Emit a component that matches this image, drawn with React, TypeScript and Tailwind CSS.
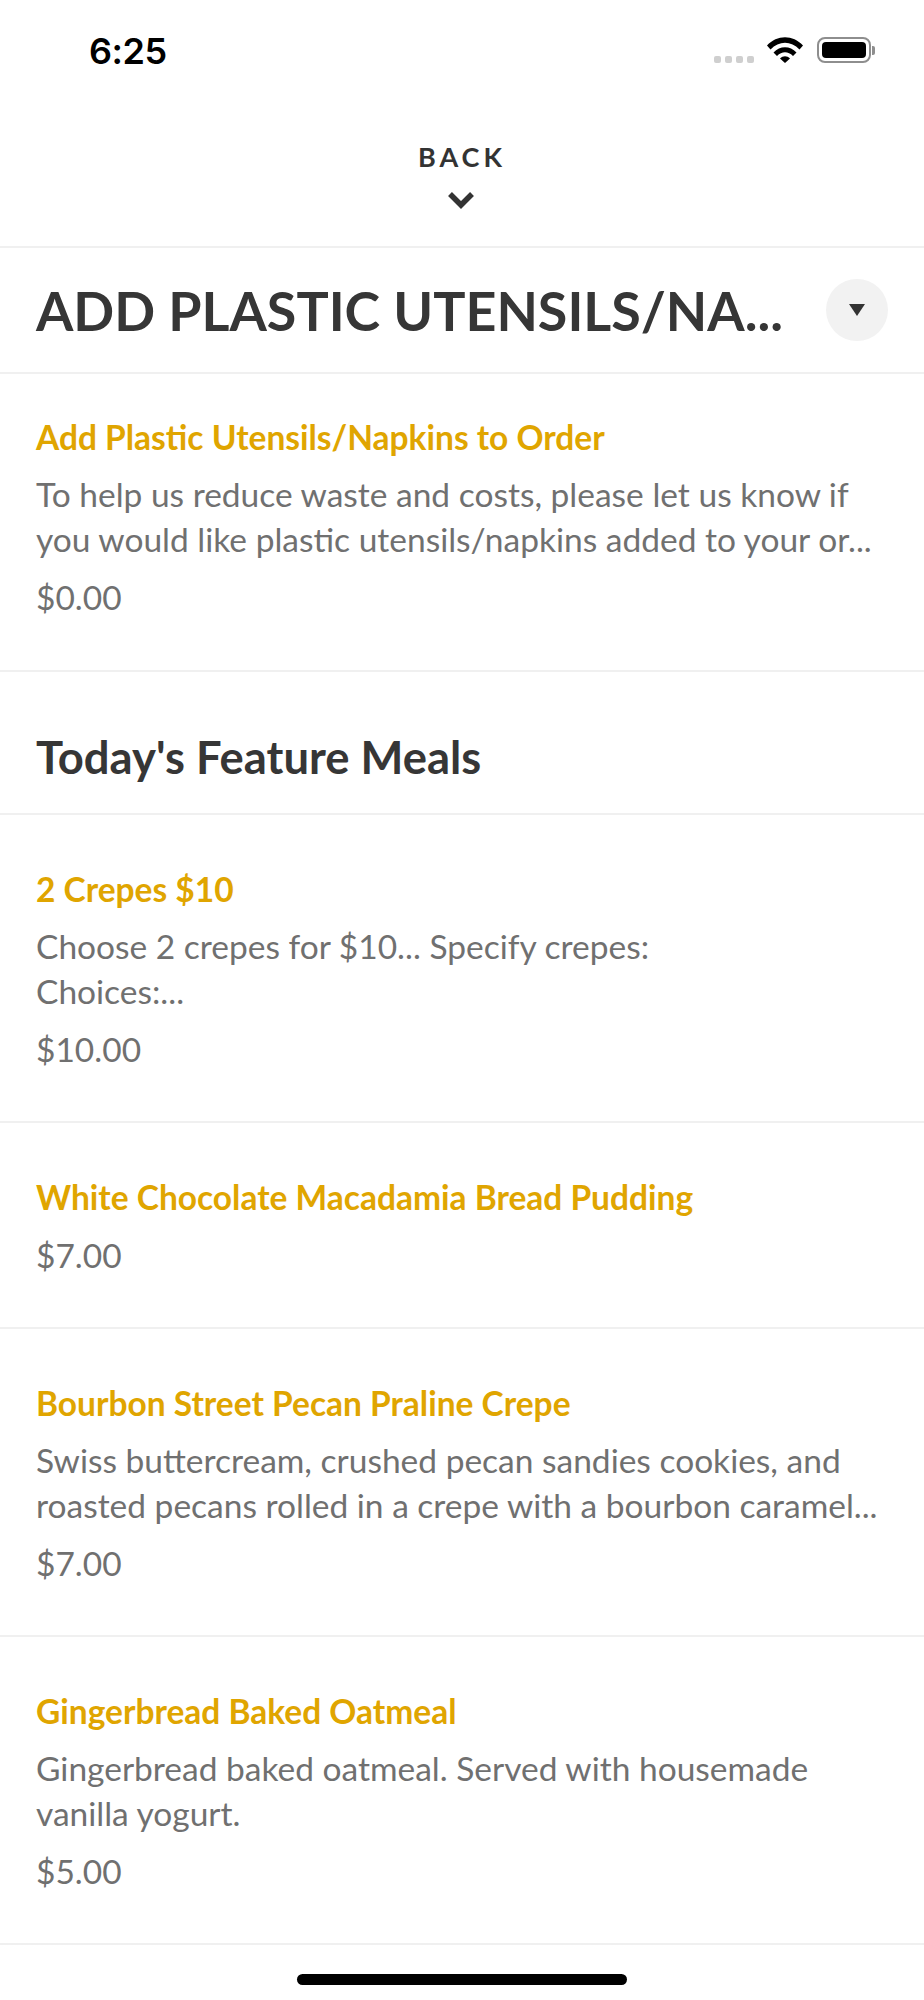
import React from 'react';

interface MealRowProps {
  title: string;
  description?: string[];
  price: string;
  compact?: boolean;
}

const MealRow: React.FC<MealRowProps> = ({ title, description, price, compact }) => (
  <div className={`border-b-2 border-[#f0f0f0] px-9 ${compact ? 'pt-[40px] pb-[50px]' : 'pt-[51px] pb-[49px]'}`}>
    <h3 className="text-[33.5px] leading-[46px] font-bold text-[#e0a500] whitespace-nowrap">{title}</h3>
    {description && (
      <div className="mt-[12px] text-[33.5px] leading-[45px] text-[#707070]">
        {description.map((line) => (
          <p key={line} className="whitespace-nowrap">{line}</p>
        ))}
      </div>
    )}
    <p className="mt-[13px] text-[33.5px] leading-[45px] text-[#707070]">{price}</p>
  </div>
);

const StatusBar = () => (
  <div className="h-[96px] flex items-start justify-between pl-[89px] pr-[49px] pt-[27px]">
    <span className="text-[36px] leading-[48px] font-semibold tracking-[-0.5px] text-black font-['Inter',sans-serif]">6:25</span>
    <div className="flex items-start pt-[10px]">
      <div className="flex gap-[4px] mt-[19px] mr-[13px]">
        <span className="w-[7px] h-[7px] rounded-[2px] bg-[#cfcfcf]"></span>
        <span className="w-[7px] h-[7px] rounded-[2px] bg-[#cfcfcf]"></span>
        <span className="w-[7px] h-[7px] rounded-[2px] bg-[#cfcfcf]"></span>
        <span className="w-[7px] h-[7px] rounded-[2px] bg-[#cfcfcf]"></span>
      </div>
      <svg width="36" height="26" viewBox="0 0 36 26" className="mr-[14px]">
        <path d="M0 8.5 C10 -2.5 26 -2.5 36 8.5 L32.5 12.5 C24 3.5 12 3.5 3.5 12.5 Z" fill="#000" />
        <path d="M6.5 15.5 C13 8.5 23 8.5 29.5 15.5 L26 19 C21 14 15 14 10 19 Z" fill="#000" />
        <path d="M13 21.5 C16 18.5 20 18.5 23 21.5 L18 26 Z" fill="#000" />
      </svg>
      <div className="flex items-center">
        <div className="w-[54px] h-[26px] rounded-[8px] border-[2px] border-[#8e8e8e] p-[3px]">
          <div className="w-full h-full rounded-[4px] bg-black"></div>
        </div>
        <span className="w-[3px] h-[9px] ml-[1px] rounded-r-[2px] bg-[#8e8e8e]"></span>
      </div>
    </div>
  </div>
);

export default function App() {
  return (
    <div className="w-[924px] min-h-[2000px] bg-white font-['Lato',sans-serif] [font-feature-settings:'liga'_1]">
      <StatusBar />

      <div className="h-[152px] border-b-2 border-[#f0f0f0] flex flex-col items-center pt-[45px]">
        <span className="text-[27px] leading-[32px] font-bold tracking-[4px] text-[#333333]">BACK</span>
        <svg width="28" height="18" viewBox="0 0 28 18" className="mt-[18px] mr-[2px]">
          <path d="M3 3 L14 14 L25 3" fill="none" stroke="#333333" strokeWidth="5.5" />
        </svg>
      </div>

      <div className="h-[126px] border-b-2 border-[#f0f0f0] flex items-center pl-9 pr-9">
        <h1 className="flex-1 text-[53.8px] leading-[64px] font-bold text-[#363636] whitespace-nowrap">ADD PLASTIC UTENSILS/NA...</h1>
        <button className="w-[62px] h-[62px] rounded-full bg-[#f2f2f2] flex items-center justify-center">
          <svg width="16" height="12" viewBox="0 0 16 12">
            <path d="M0 0 H16 L8 12 Z" fill="#333333" />
          </svg>
        </button>
      </div>

      <MealRow
        compact
        title="Add Plastic Utensils/Napkins to Order"
        description={['To help us reduce waste and costs, please let us know if', 'you would like plastic utensils/napkins added to your or...']}
        price="$0.00"
      />

      <div className="h-[143px] border-b-2 border-[#f0f0f0] flex items-end px-9 pb-[30px]">
        <h2 className="text-[45.4px] leading-[52px] font-bold text-[#363636]">Today's Feature Meals</h2>
      </div>

      <MealRow
        title="2 Crepes $10"
        description={['Choose 2 crepes for $10... Specify crepes:', 'Choices:...']}
        price="$10.00"
      />
      <MealRow title="White Chocolate Macadamia Bread Pudding" price="$7.00" />
      <MealRow
        title="Bourbon Street Pecan Praline Crepe"
        description={['Swiss buttercream, crushed pecan sandies cookies, and', 'roasted pecans rolled in a crepe with a bourbon caramel...']}
        price="$7.00"
      />
      <MealRow
        title="Gingerbread Baked Oatmeal"
        description={['Gingerbread baked oatmeal. Served with housemade', 'vanilla yogurt.']}
        price="$5.00"
      />

      <div className="flex justify-center pt-[29px]">
        <div className="w-[330px] h-[11px] rounded-full bg-black"></div>
      </div>
    </div>
  );
}
